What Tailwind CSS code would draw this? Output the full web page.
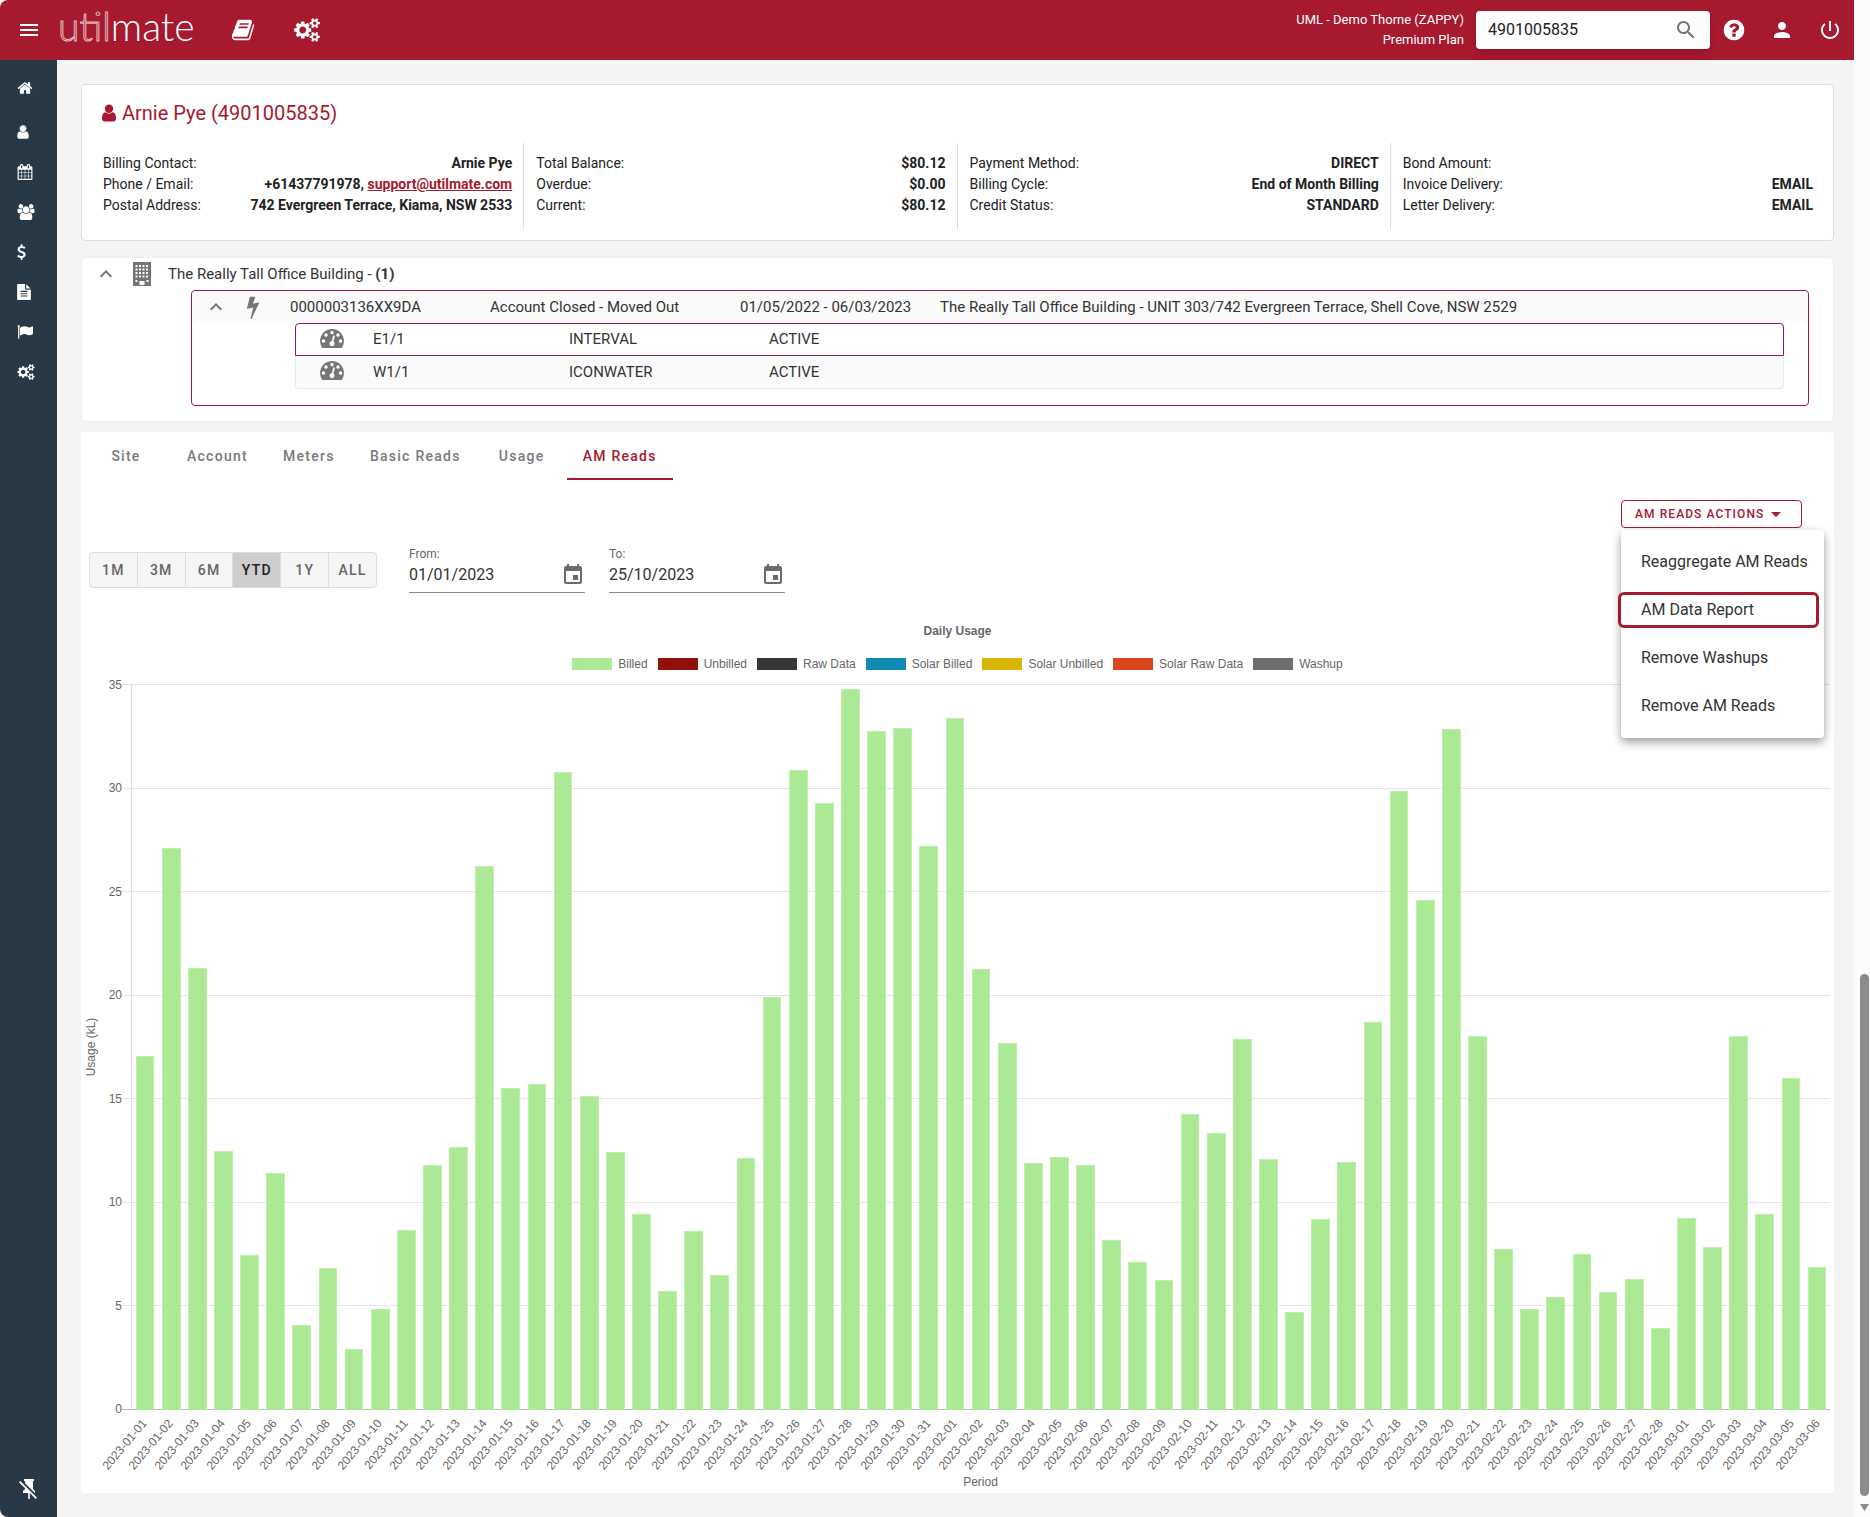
<!DOCTYPE html>
<html lang="en">
<head>
    <meta charset="UTF-8" />
    <meta name="viewport" content="width=device-width, initial-scale=1.0" />
    <title>Utilmate - Arnie Pye (4901005835)</title>

    <script src="https://cdn.jsdelivr.net/npm/@tailwindcss/browser@4"></script>
</head>
<body class="bg-white font-['Roboto',sans-serif] text-[#222]">

    <!-- icon shapes -->
    <svg class="hidden">
        <defs>
            <path id="i-home" d="M1472 992v480q0 26-19 45t-45 19h-384v-384h-256v384h-384q-26 0-45-19t-19-45v-480q0-1 .5-3t.5-3l575-474 575 474q1 2 1 6zm223-69l-62 74q-8 9-21 11h-3q-13 0-21-7l-692-577-692 577q-12 8-24 7-13-2-21-11l-62-74q-8-10-7-23.5t11-21.5l719-599q32-26 76-26t76 26l244 204v-195q0-14 9-23t23-9h192q14 0 23 9t9 23v408l219 182q10 8 11 21.5t-7 23.5z" />
            <path id="i-user" d="M1536 1399q0 109-62.5 187t-150.5 78h-854q-88 0-150.5-78t-62.5-187q0-85 8.5-160.5t31.5-152 58.5-131 94-89 134.5-34.5q131 128 313 128t313-128q76 0 134.5 34.5t94 89 58.5 131 31.5 152 8.5 160.5zm-256-887q0 159-112.5 271.5t-271.5 112.5-271.5-112.5-112.5-271.5 112.5-271.5 271.5-112.5 271.5 112.5 112.5 271.5z" />
            <path id="i-calendar" d="M192 1664h288v-288h-288v288zm352 0h320v-288h-320v288zm-352-352h288v-320h-288v320zm352 0h320v-320h-320v320zm-352-384h288v-288h-288v288zm736 736h320v-288h-320v288zm-384-736h320v-288h-320v288zm768 736h288v-288h-288v288zm-384-352h320v-320h-320v320zm-352-864v-288q0-13-9.5-22.5t-22.5-9.5h-64q-13 0-22.5 9.5t-9.5 22.5v288q0 13 9.5 22.5t22.5 9.5h64q13 0 22.5-9.5t9.5-22.5zm736 864h288v-320h-288v320zm-384-384h320v-288h-320v288zm384 0h288v-288h-288v288zm32-480v-288q0-13-9.5-22.5t-22.5-9.5h-64q-13 0-22.5 9.5t-9.5 22.5v288q0 13 9.5 22.5t22.5 9.5h64q13 0 22.5-9.5t9.5-22.5zm384-64v1280q0 52-38 90t-90 38h-1408q-52 0-90-38t-38-90v-1280q0-52 38-90t90-38h128v-96q0-66 47-113t113-47h64q66 0 113 47t47 113v96h384v-96q0-66 47-113t113-47h64q66 0 113 47t47 113v96h128q52 0 90 38t38 90z" />
            <path id="i-users" d="M593 896q-162 5-265 128h-134q-82 0-138-40.5t-56-118.5q0-353 124-353 6 0 43.5 21t97.5 42.5 119 21.5q67 0 133-23-5 37-5 66 0 139 81 256zm1071 637q0 120-73 189.5t-194 69.5h-874q-121 0-194-69.5t-73-189.5q0-53 3.5-103.5t14-109 26.5-108.5 43-97.5 62-81 85.5-53.5 111.5-20q10 0 43 21.5t73 48 107 48 135 21.5 135-21.5 107-48 73-48 43-21.5q61 0 111.5 20t85.5 53.5 62 81 43 97.5 26.5 108.5 14 109 3.5 103.5zm-1024-1277q0 106-75 181t-181 75-181-75-75-181 75-181 181-75 181 75 75 181zm704 384q0 159-112.5 271.5t-271.5 112.5-271.5-112.5-112.5-271.5 112.5-271.5 271.5-112.5 271.5 112.5 112.5 271.5zm576 225q0 78-56 118.5t-138 40.5h-134q-103-123-265-128 81-117 81-256 0-29-5-66 66 23 133 23 59 0 119-21.5t97.5-42.5 43.5-21q124 0 124 353zm-128-609q0 106-75 181t-181 75-181-75-75-181 75-181 181-75 181 75 75 181z" />
            <path id="i-dollar" d="M1362 1185q0 153-99.5 263.5t-258.5 136.5v175q0 14-9 23t-23 9h-135q-13 0-22.5-9.5t-9.5-22.5v-175q-66-9-127.5-31t-101.5-44.5-74-48-46.5-37.5-17.5-18q-17-21-2-41l103-135q7-10 23-12 15-2 24 9l2 2q113 99 243 125 37 8 74 8 81 0 142.5-43t61.5-122q0-28-15-53t-33.5-42-58.5-37.5-66-32-80-32.5q-39-16-61.5-25t-61.5-26.5-62.5-31-56.5-35.5-53.5-42.5-43.5-49-35.5-58-21-66.5-8.5-78q0-138 98-242t255-134v-180q0-13 9.5-22.5t22.5-9.5h135q14 0 23 9t9 23v176q57 6 110.5 23t87 33.5 63.5 37.5 39 29 15 14q17 18 5 38l-81 146q-8 15-23 16-14 3-27-7-3-3-14.5-12t-39-26.5-58.5-32-74.5-26-85.5-11.5q-95 0-155 43t-60 111q0 26 8.5 48t29.5 41.5 39.5 33 56 31 60.5 27 70 27.5q53 20 81 31.5t76 35 75.5 42.5 62 50 53 63.5 31.5 76.5 13 94z" />
            <path id="i-file" d="M1596 476q14 14 28 36h-472v-472q22 14 36 28zm-476 164h544v1056q0 40-28 68t-68 28h-1344q-40 0-68-28t-28-68v-1600q0-40 28-68t68-28h800v544q0 40 28 68t68 28zm160 736v-64q0-14-9-23t-23-9h-704q-14 0-23 9t-9 23v64q0 14 9 23t23 9h704q14 0 23-9t9-23zm0-256v-64q0-14-9-23t-23-9h-704q-14 0-23 9t-9 23v64q0 14 9 23t23 9h704q14 0 23-9t9-23zm0-256v-64q0-14-9-23t-23-9h-704q-14 0-23 9t-9 23v64q0 14 9 23t23 9h704q14 0 23-9t9-23z" />
            <path id="i-flag" d="M320 256q0 72-64 110v1266q0 13-9.5 22.5t-22.5 9.5h-64q-13 0-22.5-9.5t-9.5-22.5v-1266q-64-38-64-110 0-53 37.5-90.5t90.5-37.5 90.5 37.5 37.5 90.5zm1472 64v763q0 25-12.5 38.5t-39.5 27.5q-215 116-369 116-61 0-123.5-22t-108.5-48-115.5-48-142.5-22q-192 0-464 146-17 9-33 9-26 0-45-19t-19-45v-742q0-32 31-55 21-14 79-43 236-120 421-120 107 0 200 29t219 88q38 19 88 19 54 0 117.5-21t110-47 88-47 54.5-21q26 0 45 19t19 45z" />
            <path id="i-cogs" d="M896 896q0-106-75-181t-181-75-181 75-75 181 75 181 181 75 181-75 75-181zm768 512q0-52-38-90t-90-38-90 38-38 90q0 53 37.5 90.5t90.5 37.5 90.5-37.5 37.5-90.5zm0-1024q0-52-38-90t-90-38-90 38-38 90q0 53 37.5 90.5t90.5 37.5 90.5-37.5 37.5-90.5zm-384 421v185q0 10-7 19.5t-16 10.5l-155 24q-11 35-32 76 34 48 90 115 7 11 7 20 0 12-7 19-23 30-82.5 89.5t-78.5 59.5q-11 0-21-7l-115-90q-37 19-77 31-11 108-23 155-7 24-30 24h-186q-11 0-20-7.5t-10-17.5l-23-153q-34-10-75-31l-118 89q-7 7-20 7-11 0-21-8-144-133-144-160 0-9 7-19 10-14 41-53t47-61q-23-44-35-82l-152-24q-10-1-17-9.5t-7-19.5v-185q0-10 7-19.5t16-10.5l155-24q11-35 32-76-34-48-90-115-7-11-7-20 0-12 7-20 22-30 82-89t79-59q11 0 21 7l115 90q34-18 77-32 11-108 23-154 7-24 30-24h186q11 0 20 7.5t10 17.5l23 153q34 10 75 31l118-89q8-7 20-7 11 0 21 8 144 133 144 160 0 8-7 19-12 16-42 54t-45 60q23 48 34 82l152 23q10 2 17 10.5t7 19.5zm640 533v140q0 16-149 31-12 27-30 52 51 113 51 138 0 4-4 7-122 71-124 71-8 0-46-47t-52-68q-20 2-30 2t-30-2q-14 21-52 68t-46 47q-2 0-124-71-4-3-4-7 0-25 51-138-18-25-30-52-149-15-149-31v-140q0-16 149-31 13-29 30-52-51-113-51-138 0-4 4-7 4-2 35-20t59-34 30-16q8 0 46 46.5t52 67.5q20-2 30-2t30 2q51-71 92-112l6-2q4 0 124 70 4 3 4 7 0 25-51 138 17 23 30 52 149 15 149 31zm0-1024v140q0 16-149 31-12 27-30 52 51 113 51 138 0 4-4 7-122 71-124 71-8 0-46-47t-52-68q-20 2-30 2t-30-2q-14 21-52 68t-46 47q-2 0-124-71-4-3-4-7 0-25 51-138-18-25-30-52-149-15-149-31v-140q0-16 149-31 13-29 30-52-51-113-51-138 0-4 4-7 4-2 35-20t59-34 30-16q8 0 46 46.5t52 67.5q20-2 30-2t30 2q51-71 92-112l6-2q4 0 124 70 4 3 4 7 0 25-51 138 17 23 30 52 149 15 149 31z" />
            <path id="i-gauge" d="M384 1152q0-53-37.5-90.5t-90.5-37.5-90.5 37.5-37.5 90.5 37.5 90.5 90.5 37.5 90.5-37.5 37.5-90.5zm192-448q0-53-37.5-90.5t-90.5-37.5-90.5 37.5-37.5 90.5 37.5 90.5 90.5 37.5 90.5-37.5 37.5-90.5zm428 481l101-382q6-26-7.5-48.5t-38.5-29.5-48 6.5-30 39.5l-101 382q-60 5-107 43.5t-63 98.5q-20 77 20 146t117 89 146-20 89-117q16-60-6-117t-72-91zm660-33q0-53-37.5-90.5t-90.5-37.5-90.5 37.5-37.5 90.5 37.5 90.5 90.5 37.5 90.5-37.5 37.5-90.5zm-640-640q0-53-37.5-90.5t-90.5-37.5-90.5 37.5-37.5 90.5 37.5 90.5 90.5 37.5 90.5-37.5 37.5-90.5zm448 192q0-53-37.5-90.5t-90.5-37.5-90.5 37.5-37.5 90.5 37.5 90.5 90.5 37.5 90.5-37.5 37.5-90.5zm320 448q0 261-141 483-19 29-54 29h-1402q-35 0-54-29-141-221-141-483 0-182 71-348t191-286 286-191 348-71 348 71 286 191 191 286 71 348z" />
            <path id="i-event" d="M17 12h-5v5h5v-5zM16 1v2H8V1H6v2H5c-1.11 0-1.99.9-1.99 2L3 19c0 1.100.89 2 2 2h14c1.100 0 2-.9 2-2V5c0-1.100-.9-2-2-2h-1V1h-2zm3 18H5V8h14v11z" />
            <path id="i-up" d="M12 8l-6 6 1.410 1.410L12 10.830l4.590 4.580L18 14z" />
        </defs>
    </svg>

    <div class="flex min-h-screen">
        <div class="flex flex-1 min-w-0 flex-col">

            <header class="flex h-[60px] items-center rounded-tl-lg bg-[#a6192e] pl-[17px] pr-3 text-white">
                <button type="button" aria-label="Menu">
                    <svg class="size-6" viewBox="0 0 24 24" fill="currentColor"><path d="M3 18h18v-2H3v2zm0-5h18v-2H3v2zm0-7v2h18V6H3z" /></svg>
                </button>
                <a href="#" class="ml-[17px] w-[173px] font-['Lato',sans-serif] text-[39px] leading-[52px] pb-2 font-light"><span class="text-transparent [-webkit-text-stroke:1px_#ffffffb3]">util</span>mate</a>
                <a href="#" aria-label="Reports" class="w-[63px]">
                    <svg class="size-6" viewBox="0 0 1792 1792" fill="currentColor"><path d="M1703 478q40 57 18 129l-275 906q-19 64-76.5 107.5t-122.5 43.5h-923q-77 0-148.5-53.5t-99.5-131.5q-24-67-2-127 0-4 3-27t4-37q1-8-3-21.5t-3-19.5q2-11 8-21t16.5-23.5 16.5-23.5q23-38 45-91.5t30-91.5q3-10 .5-30t-.5-28q3-11 17-28t17-23q21-36 42-92t25-90q1-9-2.5-32t.5-28q4-13 22-30.5t22-22.5q19-26 42.5-84.5t27.5-96.5q1-8-3-25.5t-2-26.5q2-8 9-18t18-23 17-21q8-12 16.5-30.5t15-35 16-36 19.5-32 26.5-23.5 36-11.5 47.5 5.5l-1 3q38-9 51-9h761q74 0 114 56t18 130l-274 906q-36 119-71.5 153.5t-128.5 34.5h-869q-27 0-38 15-11 16-1 43 24 70 144 70h923q29 0 56-15.5t35-41.5l300-987q7-22 5-57 38 15 59 43zm-1064 2q-4 13 2 22.5t20 9.5h608q13 0 25.5-9.5t16.5-22.5l21-64q4-13-2-22.5t-20-9.5h-608q-13 0-25.5 9.5t-16.5 22.5zm-83 256q-4 13 2 22.5t20 9.5h608q13 0 25.5-9.5t16.5-22.5l21-64q4-13-2-22.5t-20-9.5h-608q-13 0-25.5 9.5t-16.5 22.5z" /></svg>
                </a>
                <a href="#" aria-label="Settings">
                    <svg class="h-6 w-[26px]" viewBox="0 0 1920 1792" fill="currentColor"><use href="#i-cogs" /></svg>
                </a>

                <div class="ml-auto text-right text-[13px] leading-5">
                    <p>UML - Demo Thorne (ZAPPY)</p>
                    <p>Premium Plan</p>
                </div>
                <label class="ml-3 flex h-[38px] w-[234px] items-center rounded bg-white px-3 shadow-md">
                    <input type="text" aria-label="Search" value="4901005835" class="min-w-0 flex-1 text-base text-[#222] outline-none" />
                    <svg class="size-6 text-[#757575]" viewBox="0 0 24 24" fill="currentColor"><path d="M15.500 14h-.79l-.28-.27C15.410 12.590 16 11.110 16 9.500 16 5.910 13.090 3 9.500 3S3 5.910 3 9.500 5.910 16 9.500 16c1.610 0 3.090-.59 4.230-1.570l.27.28v.79l5 4.990L20.490 19l-4.990-5zm-6 0C7.010 14 5 11.990 5 9.500S7.010 5 9.500 5 14 7.010 14 9.500 11.990 14 9.500 14z" /></svg>
                </label>
                <div class="ml-3 flex gap-6">
                    <button type="button" aria-label="Help">
                        <svg class="size-6" viewBox="0 0 1792 1792" fill="currentColor"><path d="M1024 1376v-192q0-14-9-23t-23-9h-192q-14 0-23 9t-9 23v192q0 14 9 23t23 9h192q14 0 23-9t9-23zm256-672q0-88-55.500-163t-138.500-116-170-41q-243 0-371 213-15 24 8 42l132 100q7 6 19 6 16 0 25-12 53-68 86-92 34-24 86-24 48 0 85.500 26t37.500 59q0 38-20 61t-68 45q-63 28-115.500 86.500t-52.500 125.500v36q0 14 9 23t23 9h192q14 0 23-9t9-23q0-19 21.500-49.500t54.500-49.500q32-18 49-28.500t46-35 44.500-48 28-60.500 12.500-81zm384 192q0 209-103 385.500t-279.500 279.500-385.500 103-385.500-103-279.500-279.500-103-385.500 103-385.500 279.500-279.500 385.500-103 385.500 103 279.500 279.500 103 385.500z" /></svg>
                    </button>
                    <button type="button" aria-label="Profile">
                        <svg class="size-6" viewBox="0 0 24 24" fill="currentColor"><path d="M12 12c2.210 0 4-1.790 4-4s-1.790-4-4-4-4 1.790-4 4 1.790 4 4 4zm0 2c-2.670 0-8 1.340-8 4v2h16v-2c0-2.660-5.330-4-8-4z" /></svg>
                    </button>
                    <button type="button" aria-label="Log out">
                        <svg class="size-6" viewBox="0 0 24 24" fill="currentColor"><path d="M13 3h-2v10h2V3zm4.830 2.170l-1.420 1.420C17.990 7.860 19 9.810 19 12c0 3.870-3.130 7-7 7s-7-3.130-7-7c0-2.190 1.010-4.140 2.580-5.420L6.170 5.170C4.230 6.820 3 9.260 3 12c0 4.970 4.030 9 9 9s9-4.030 9-9c0-2.740-1.230-5.180-3.170-6.830z" /></svg>
                    </button>
                </div>
            </header>

            <div class="flex flex-1">
                <nav aria-label="Main" class="flex w-[57px] shrink-0 flex-col rounded-bl-lg bg-[#293845] pt-2 pb-4 pl-[17px] text-white">
                    <a href="#" aria-label="Home" class="mb-1 flex h-10 items-center"><svg class="size-4" viewBox="0 0 1792 1792" fill="currentColor"><use href="#i-home" /></svg></a>
                    <a href="#" aria-label="Customers" class="flex h-10 items-center"><svg class="h-4 w-3" viewBox="256 0 1280 1792" fill="currentColor"><use href="#i-user" /></svg></a>
                    <a href="#" aria-label="Calendar" class="flex h-10 items-center"><svg class="size-4" viewBox="0 0 1792 1792" fill="currentColor"><use href="#i-calendar" /></svg></a>
                    <a href="#" aria-label="Groups" class="flex h-10 items-center"><svg class="h-4 w-[18px]" viewBox="0 0 1920 1792" fill="currentColor"><use href="#i-users" /></svg></a>
                    <a href="#" aria-label="Billing" class="flex h-10 items-center"><svg class="h-4 w-[9px]" viewBox="384 0 1024 1792" fill="currentColor"><use href="#i-dollar" /></svg></a>
                    <a href="#" aria-label="Documents" class="flex h-10 items-center"><svg class="h-4 w-[14px]" viewBox="128 0 1536 1792" fill="currentColor"><use href="#i-file" /></svg></a>
                    <a href="#" aria-label="Flags" class="flex h-10 items-center"><svg class="size-4" viewBox="0 0 1792 1792" fill="currentColor"><use href="#i-flag" /></svg></a>
                    <a href="#" aria-label="Configuration" class="flex h-10 items-center"><svg class="h-4 w-[18px]" viewBox="0 0 1920 1792" fill="currentColor"><use href="#i-cogs" /></svg></a>
                    <button type="button" aria-label="Unpin menu" class="mt-auto w-6">
                        <svg class="size-6" viewBox="0 0 24 24" fill="currentColor"><path d="M2,5.270L3.280,4L20,20.720L18.730,22L12.800,16.070V22H11.200V16H6V14L8,12V11.270L2,5.270M16,12L18,14V16H17.820L8,6.180V4H7V2H17V4H16V12Z" /></svg>
                    </button>
                </nav>

                <main class="flex min-w-0 flex-1 flex-col bg-[#f4f4f4] pl-6 pt-6 pr-5 pb-6">

                    <!-- customer summary -->
                    <section class="rounded border border-[#ddd] bg-white px-[9px] pt-3 pb-[11px]">
                        <h1 class="flex h-8 items-center gap-[6px] pl-[11px] text-xl text-[#a6192e]">
                            <svg class="h-5 w-[14px]" viewBox="256 0 1280 1792" fill="currentColor"><use href="#i-user" /></svg>
                            Arnie Pye (4901005835)
                        </h1>
                        <div class="mt-[14px] grid grid-cols-4 divide-x divide-[#ddd] text-sm leading-[21px]">
                            <dl class="h-[86px] pl-3 pr-[11px] pt-[10px]">
                                <div class="flex justify-between"><dt>Billing Contact:</dt><dd class="font-bold">Arnie Pye</dd></div>
                                <div class="flex justify-between"><dt>Phone / Email:</dt><dd class="font-bold">+61437791978, <a href="mailto:support@utilmate.com" class="text-[#a6192e] underline">support@utilmate.com</a></dd></div>
                                <div class="flex justify-between"><dt>Postal Address:</dt><dd class="font-bold">742 Evergreen Terrace, Kiama, NSW 2533</dd></div>
                            </dl>
                            <dl class="pl-3 pr-[11px] pt-[10px]">
                                <div class="flex justify-between"><dt>Total Balance:</dt><dd class="font-bold">$80.12</dd></div>
                                <div class="flex justify-between"><dt>Overdue:</dt><dd class="font-bold">$0.00</dd></div>
                                <div class="flex justify-between"><dt>Current:</dt><dd class="font-bold">$80.12</dd></div>
                            </dl>
                            <dl class="pl-3 pr-[11px] pt-[10px]">
                                <div class="flex justify-between"><dt>Payment Method:</dt><dd class="font-bold">DIRECT</dd></div>
                                <div class="flex justify-between"><dt>Billing Cycle:</dt><dd class="font-bold">End of Month Billing</dd></div>
                                <div class="flex justify-between"><dt>Credit Status:</dt><dd class="font-bold">STANDARD</dd></div>
                            </dl>
                            <dl class="pl-3 pr-[11px] pt-[10px]">
                                <div class="flex justify-between"><dt>Bond Amount:</dt><dd class="font-bold"></dd></div>
                                <div class="flex justify-between"><dt>Invoice Delivery:</dt><dd class="font-bold">EMAIL</dd></div>
                                <div class="flex justify-between"><dt>Letter Delivery:</dt><dd class="font-bold">EMAIL</dd></div>
                            </dl>
                        </div>
                    </section>

                    <!-- site / account / meter tree -->
                    <section class="mt-4 rounded border border-[#ececec] bg-white pb-[15px] text-[15px] text-[#333]">
                        <div class="flex h-8 items-center pl-3">
                            <button type="button" aria-label="Collapse site" class="text-[#757575]"><svg class="size-6" viewBox="0 0 24 24" fill="currentColor"><use href="#i-up" /></svg></button>
                            <svg class="ml-[14px] h-6 w-5 text-[#757575]" viewBox="0 0 20 24">
                                <path fill="currentColor" d="M1 0h18v24H1z" />
                                <path stroke="#fff" stroke-width="2" stroke-dasharray="2 1.500" d="M3.500 4h14M3.500 7.500h14M3.500 11h14M3.500 14.500h14" />
                                <path fill="#fff" d="M3.500 18h2v2h-2zM14.500 18h2v2h-2zM7.500 19h5v4h-5z" />
                            </svg>
                            <span class="ml-4">The Really Tall Office Building - <b>(1)</b></span>
                        </div>
                        <div class="mr-6 ml-[109px] rounded border border-[#a6192e] pb-4">
                            <div class="flex h-8 items-center rounded-t bg-[#fafafa] pl-3">
                                <button type="button" aria-label="Collapse account" class="text-[#757575]"><svg class="size-6" viewBox="0 0 24 24" fill="currentColor"><use href="#i-up" /></svg></button>
                                <svg class="ml-[13px] mr-[25px] size-6 text-[#757575]" viewBox="0 0 1792 1792" fill="currentColor"><path d="M1333 566q18 20 7 44l-540 1157q-13 25-42 25-4 0-14-2-17-5-25.500-19t-4.500-30l197-808-406 101q-4 1-12 1-18 0-31-11-18-15-13-39l201-825q4-14 16-23t28-9h328q19 0 32 12.500t13 29.500q0 8-5 18l-171 463 396-98q8-2 12-2 19 0 34 15z" /></svg>
                                <span class="w-[200px]">0000003136XX9DA</span>
                                <span class="w-[250px]">Account Closed - Moved Out</span>
                                <span class="w-[200px]">01/05/2022 - 06/03/2023</span>
                                <span>The Really Tall Office Building - UNIT 303/742 Evergreen Terrace, Shell Cove, NSW 2529</span>
                            </div>
                            <div class="mr-6 ml-[103px]">
                                <div class="flex h-[33px] items-center rounded-t border border-[#a6192e] bg-white pl-6">
                                    <svg class="mb-[3px] h-[19px] w-6 text-[#757575]" viewBox="0 256 1792 1408" fill="currentColor"><use href="#i-gauge" /></svg>
                                    <span class="ml-[29px] w-[196px]">E1/1</span>
                                    <span class="w-[200px]">INTERVAL</span>
                                    <span>ACTIVE</span>
                                </div>
                                <div class="flex h-[33px] items-center rounded-b border border-t-0 border-[#e8e8e8] bg-[#fafafa] pl-6">
                                    <svg class="mb-[3px] h-[19px] w-6 text-[#757575]" viewBox="0 256 1792 1408" fill="currentColor"><use href="#i-gauge" /></svg>
                                    <span class="ml-[29px] w-[196px]">W1/1</span>
                                    <span class="w-[200px]">ICONWATER</span>
                                    <span>ACTIVE</span>
                                </div>
                            </div>
                        </div>
                    </section>

                    <section class="mt-[10px] flex-1 rounded bg-white">
                        <div role="tablist" class="flex h-12 text-sm font-medium tracking-[0.09em] text-[#7a7a7a]">
                            <button type="button" role="tab" class="min-w-[90px] px-4">Site</button>
                            <button type="button" role="tab" class="min-w-[90px] px-4">Account</button>
                            <button type="button" role="tab" class="min-w-[90px] px-4">Meters</button>
                            <button type="button" role="tab" class="min-w-[90px] px-4">Basic Reads</button>
                            <button type="button" role="tab" class="min-w-[90px] px-4">Usage</button>
                            <button type="button" role="tab" aria-selected="true" class="min-w-[90px] border-b-2 border-[#a6192e] px-4 pt-[2px] text-[#a6192e]">AM Reads</button>
                        </div>

                        <div class="mt-5 flex justify-end pr-8">
                            <div class="relative">
                                <button type="button" aria-haspopup="menu" aria-expanded="true" class="flex h-7 w-[181px] items-center rounded border border-[#a6192e] pl-[13px] text-xs font-medium tracking-[0.09em] text-[#a6192e]">
                                    AM READS ACTIONS
                                    <svg class="size-6" viewBox="0 0 24 24" fill="currentColor"><path d="M7 10l5 5 5-5z" /></svg>
                                </button>
                                <div role="menu" class="absolute top-[30px] left-0 z-10 flex w-[203px] flex-col rounded bg-white py-2 shadow-[0_4px_10px_rgba(0,0,0,0.4)]">
                                    <button type="button" role="menuitem" class="h-12 pl-5 text-left text-base text-[#333]">Reaggregate AM Reads</button>
                                    <button type="button" role="menuitem" class="-ml-[3px] mr-[5px] my-[6px] h-9 rounded-md border-[3px] border-[#a6192e] pl-5 text-left text-base text-[#333]">AM Data Report</button>
                                    <button type="button" role="menuitem" class="h-12 pl-5 text-left text-base text-[#333]">Remove Washups</button>
                                    <button type="button" role="menuitem" class="h-12 pl-5 text-left text-base text-[#333]">Remove AM Reads</button>
                                </div>
                            </div>
                        </div>

                        <div class="mt-[18px] flex items-center pl-2">
                            <div class="flex h-9 w-72 divide-x divide-[#ddd] overflow-hidden rounded border border-[#ddd] bg-[#f5f5f5] text-sm font-medium tracking-[0.09em] text-[#666]">
                                <button type="button" class="flex-1 basis-0">1M</button>
                                <button type="button" class="flex-1 basis-0">3M</button>
                                <button type="button" class="flex-1 basis-0">6M</button>
                                <button type="button" class="flex-1 basis-0 bg-[#cdcdcd] text-[#222]">YTD</button>
                                <button type="button" class="flex-1 basis-0">1Y</button>
                                <button type="button" class="flex-1 basis-0">ALL</button>
                            </div>
                            <label class="ml-8 flex h-[47px] w-[176px] flex-col gap-px border-b border-[#8a8a8a] text-xs text-[#666]">
                                From:
                                <span class="flex items-center">
                                    <input type="text" value="01/01/2023" class="min-w-0 flex-1 text-base text-[#333] outline-none" />
                                    <svg class="size-6 text-[#6b6b6b]" viewBox="0 0 24 24" fill="currentColor"><use href="#i-event" /></svg>
                                </span>
                            </label>
                            <label class="ml-6 flex h-[47px] w-[176px] flex-col gap-px border-b border-[#8a8a8a] text-xs text-[#666]">
                                To:
                                <span class="flex items-center">
                                    <input type="text" value="25/10/2023" class="min-w-0 flex-1 text-base text-[#333] outline-none" />
                                    <svg class="size-6 text-[#6b6b6b]" viewBox="0 0 24 24" fill="currentColor"><use href="#i-event" /></svg>
                                </span>
                            </label>
                        </div>

                        <!-- daily usage chart -->
                        <div class="mt-[30px] font-['Liberation_Sans',Arial,sans-serif] text-xs text-[#666]">
                            <h2 class="text-center font-bold">Daily Usage</h2>
                            <ul id="legend" class="mt-[17px] flex justify-center gap-[10px]"></ul>
                            <div class="mt-3 flex pr-1">
                                <div class="flex w-5 items-center justify-center"><span class="-rotate-90 whitespace-nowrap">Usage (kL)</span></div>
                                <div id="ticks" class="flex w-[21px] flex-col justify-between text-right"></div>
                                <div class="relative ml-[9px] h-[726px] flex-1 border-l border-[#ddd]">
                                    <div id="grid" class="absolute inset-y-0 right-0 -left-[10px] flex flex-col justify-between"></div>
                                    <div id="bars" class="relative flex h-full items-end"></div>
                                </div>
                            </div>
                            <div id="days" class="ml-[50px] mr-1 flex h-16 pt-[3px]"></div>
                            <p class="pl-[50px] pr-1 text-center">Period</p>
                        </div>
                    </section>
                </main>
            </div>
        </div>

        <!-- page scrollbar -->
        <div class="flex w-4 shrink-0 flex-col items-center justify-end bg-[#fcfcfc] pb-[6px] pl-1">
            <div class="h-[522px] w-[9px] rounded-full bg-[#8b8b8b]"></div>
            <svg class="mt-2 h-[7px] w-[9px] text-[#8b8b8b]" viewBox="0 0 9 7" fill="currentColor"><path d="M0 0h9L4.500 7z" /></svg>
        </div>
    </div>

    <script>
        "use strict";

        const max = 35;
        const series = [
            ["Billed", "#abe995"],
            ["Unbilled", "#90120b"],
            ["Raw Data", "#353835"],
            ["Solar Billed", "#118ab2"],
            ["Solar Unbilled", "#d8b406"],
            ["Solar Raw Data", "#d9481c"],
            ["Washup", "#6e6e6e"],
        ];
        const usage = [
            17, 27.06, 21.25, 12.43, 7.41, 11.38, 4.04, 6.79, 2.87, 4.84, 8.65, 11.77, 12.62, 26.17, 15.5, 15.66,
            30.7, 15.1, 12.38, 9.4, 5.7, 8.6, 6.45, 12.1, 19.85, 30.8, 29.2, 34.7, 32.7, 32.85, 27.15,
            33.3, 21.2, 17.65, 11.85, 12.15, 11.75, 8.15, 7.1, 6.2, 14.2, 13.3, 17.85, 12.05, 4.7, 9.15,
            11.9, 18.65, 29.8, 24.55, 32.8, 18, 7.7, 4.8, 5.4, 7.45, 5.65, 6.25, 3.9,
            9.2, 7.8, 18, 9.4, 15.95, 6.85,
        ];

        document.getElementById("legend").innerHTML = series.map(([name, color]) =>
            `<li class="flex items-center gap-[6px]"><span class="h-3 w-10" style="background:${color}"></span>${name}</li>`).join("");

        for (let v = max; v >= 0; v -= 5) {
            document.getElementById("ticks").innerHTML += `<span class="flex h-px items-center justify-end">${v}</span>`;
            document.getElementById("grid").innerHTML += v
                ? `<div class="h-px bg-[#e5e5e5]"></div>`
                : `<div class="h-px bg-[#bbb]"></div>`;
        }

        usage.forEach((v, i) => {
            const day = new Date(Date.UTC(2023, 0, 1 + i)).toISOString().slice(0, 10);
            // the extra pixel covers the zero line
            document.getElementById("bars").innerHTML +=
                `<div class="flex h-full flex-1 items-end justify-center"><div class="w-[72%] border border-b-0 border-[#bdf0ab] bg-[#abe995]" style="height:calc(${v / max * 100}% + 1px)"></div></div>`;
            document.getElementById("days").innerHTML +=
                `<div class="w-0 flex-1"><div class="flex w-1/2 justify-end"><span class="origin-right -rotate-50 whitespace-nowrap">${day}</span></div></div>`;
        });
    </script>
</body>
</html>
